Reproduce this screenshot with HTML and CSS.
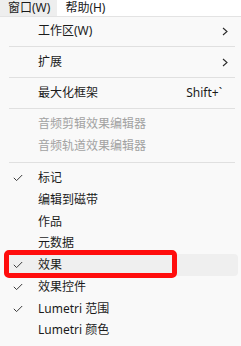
FILE: index.html
```html
<!DOCTYPE html>
<html lang="zh-CN">
<head>
<meta charset="utf-8">
<link rel="stylesheet" href="styles.css">
</head>
<body>
<div class="menubar">
  <div class="mb-item active">窗口(W)</div>
  <div class="mb-item">帮助(H)</div>
</div>
<div class="menu">
  <div class="item"><span class="chk"></span><span class="label">工作区(W)</span><svg class="chev" width="6" height="9" viewBox="0 0 6 9"><polyline points="1,1 5,4.5 1,8" fill="none" stroke="#2b2b2b" stroke-width="1.1"/></svg></div>
  <div class="sep"></div>
  <div class="item"><span class="chk"></span><span class="label">扩展</span><svg class="chev" width="6" height="9" viewBox="0 0 6 9"><polyline points="1,1 5,4.5 1,8" fill="none" stroke="#2b2b2b" stroke-width="1.1"/></svg></div>
  <div class="sep"></div>
  <div class="item"><span class="chk"></span><span class="label">最大化框架</span><span class="shortcut">Shift+`</span></div>
  <div class="sep"></div>
  <div class="item disabled"><span class="chk"></span><span class="label">音频剪辑效果编辑器</span></div>
  <div class="item disabled"><span class="chk"></span><span class="label">音频轨道效果编辑器</span></div>
  <div class="sep sep-wide"></div>
  <div class="item tight"><span class="chk"><svg width="10" height="8" viewBox="0 0 10 8"><polyline points="0.8,3.8 3.6,6.6 9.2,1" fill="none" stroke="#3a3a3a" stroke-width="1"/></svg></span><span class="label">标记</span></div>
  <div class="item tight"><span class="chk"></span><span class="label">编辑到磁带</span></div>
  <div class="item tight"><span class="chk"></span><span class="label">作品</span></div>
  <div class="item tight"><span class="chk"></span><span class="label">元数据</span></div>
  <div class="item tight hover"><span class="chk"><svg width="10" height="8" viewBox="0 0 10 8"><polyline points="0.8,3.8 3.6,6.6 9.2,1" fill="none" stroke="#3a3a3a" stroke-width="1"/></svg></span><span class="label">效果</span><span class="mark"></span></div>
  <div class="item tight"><span class="chk"><svg width="10" height="8" viewBox="0 0 10 8"><polyline points="0.8,3.8 3.6,6.6 9.2,1" fill="none" stroke="#3a3a3a" stroke-width="1"/></svg></span><span class="label">效果控件</span></div>
  <div class="item tight"><span class="chk"><svg width="10" height="8" viewBox="0 0 10 8"><polyline points="0.8,3.8 3.6,6.6 9.2,1" fill="none" stroke="#3a3a3a" stroke-width="1"/></svg></span><span class="label">Lumetri 范围</span></div>
  <div class="item tight"><span class="chk"></span><span class="label">Lumetri 颜色</span></div>
</div>
</body>
</html>
```
FILE: styles.css
```css
html, body {
  margin: 0;
  padding: 0;
}
body {
  background: #f9f9f9;
  font-family: "Noto Sans", "Noto Sans CJK SC", sans-serif;
  font-size: 12px;
  color: #1b1b1b;
  width: 241px;
  height: 346px;
  overflow: hidden;
}
.menubar {
  display: flex;
  height: 16px;
  background: #ffffff;
  border-bottom: 1px solid #e3e3e3;
}
.mb-item {
  height: 16px;
  line-height: 15px;
  padding: 0 7px 0 8px;
  color: #1a1a1a;
}
.mb-item.active {
  background: #eeeeee;
}
.menu {
  display: flex;
  flex-direction: column;
  padding-top: 3px;
}
.item {
  position: relative;
  display: flex;
  align-items: center;
  height: 22px;
  margin: 0 3px 0 4px;
  border-radius: 4px;
  line-height: 22px;
  white-space: nowrap;
}
.item.tight {
  height: 21.8px;
}
.item.hover {
  background: #efefef;
}
.item.disabled {
  color: #a2a2a2;
}
.chk {
  width: 34px;
  height: 22px;
  display: flex;
  align-items: center;
  padding-left: 9px;
  box-sizing: border-box;
  flex: none;
}
.label {
  flex: 1;
}
.shortcut {
  padding-right: 16px;
}
.chev {
  margin-right: 10px;
  flex: none;
}
.sep {
  height: 1px;
  background: #e0e0e0;
  margin: 4px 6px 4px 9px;
}
.sep.sep-wide {
  margin-top: 5px;
}
.mark {
  position: absolute;
  left: 0;
  top: -4px;
  width: 173px;
  height: 28px;
  box-sizing: border-box;
  border: 5px solid #ff0d0d;
  border-radius: 5px;
}
```
